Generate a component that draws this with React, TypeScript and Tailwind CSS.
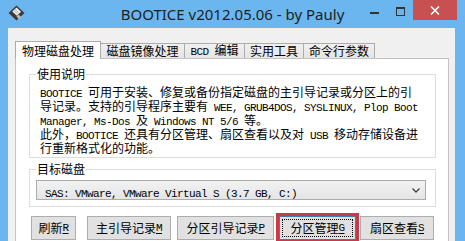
import React from "react";

const cjk = "font-['Noto_Sans_CJK_SC',sans-serif]";

function M({ children }: { children: React.ReactNode }) {
  return (
    <span className="font-['Liberation_Mono','Noto_Sans_CJK_SC',monospace] text-[11px] tracking-[-0.6px]">
      {children}
    </span>
  );
}

function Acc({ children }: { children: React.ReactNode }) {
  return (
    <span className="font-['Liberation_Mono',monospace] text-[11px] tracking-[-0.6px] underline underline-offset-[2px]">
      {children}
    </span>
  );
}

function Tab({ w, active, children, first }: { w: string; active?: boolean; children: React.ReactNode; first?: boolean }) {
  return (
    <div
      className={
        active
          ? `${w} h-[18px] bg-white border border-b-0 border-[#acacac] relative z-10 -mb-px flex items-center justify-center text-[12px] leading-[14px] text-black ${first ? "" : "-ml-px"}`
          : `${w} h-[15px] bg-gradient-to-b from-[#f0f0f0] to-[#e5e5e5] border border-b-0 border-[#acacac] flex items-center justify-center text-[12px] leading-[14px] text-black -ml-px`
      }
    >
      <span className="whitespace-pre">{children}</span>
    </div>
  );
}

function Btn({ w, ml, children }: { w: string; ml: string; children: React.ReactNode }) {
  return (
    <div
      className={`${w} ${ml} mt-[3px] h-[24px] shrink-0 bg-[#e1e1e1] border border-[#adadad] flex items-center justify-center text-[12px] leading-[14px] text-black whitespace-pre`}
    >
      {children}
    </div>
  );
}

export default function App() {
  return (
    <div className={`w-[465px] h-[241px] overflow-hidden bg-[#6cb6ef] flex flex-col ${cjk}`}>
      {/* Title bar */}
      <div className="h-[28px] shrink-0 grid grid-cols-[1fr_auto_1fr]">
        <div className="flex items-start pl-[8px] pt-[5px]">
          <svg width="17" height="16" viewBox="0 0 17 16">
            <polygon points="8.5,0.5 16.5,8 8.5,15.5 0.5,8" fill="#3b3b3b" />
            <polygon points="8.5,2.5 13,6.8 8.8,10.8 4.3,6.5" fill="#f4f4f4" />
            <polygon points="10.5,9.5 13.5,12.3 11,14.2 8.5,11.6" fill="#bdbdbd" />
            <line x1="6" y1="5.6" x2="9.6" y2="9" stroke="#9a9a9a" strokeWidth="0.8" />
            <line x1="7.2" y1="4.4" x2="10.8" y2="7.8" stroke="#9a9a9a" strokeWidth="0.8" />
          </svg>
        </div>
        <div className="font-['Noto_Sans',sans-serif] text-[15px] leading-[28px] text-[#1e1e1e] whitespace-pre">
          BOOTICE v2012.05.06 - by Pauly
        </div>
        <div className="flex justify-end items-start pr-[8px]">
          <div className="w-[26px] h-[20px] flex justify-center items-start pt-[12px]">
            <div className="w-[9px] h-[2px] bg-[#333]" />
          </div>
          <div className="w-[26px] h-[20px] flex justify-center items-start pt-[7px]">
            <div className="w-[9px] h-[9px] border border-t-2 border-[#333]" />
          </div>
          <div className="w-[44px] h-[20px] bg-[#c75050] flex items-center justify-center">
            <svg width="10" height="9" viewBox="0 0 10 9">
              <path d="M1 0.5 L9 8.5 M9 0.5 L1 8.5" stroke="#fff" strokeWidth="1.6" />
            </svg>
          </div>
        </div>
      </div>

      {/* Client area */}
      <div className="flex-1 ml-[8px] mr-[10px] bg-[#f0f0f0] pt-[12px] pl-[7px] pr-[6px] flex flex-col">
        {/* Tabs */}
        <div className="flex items-end h-[18px] shrink-0">
          <Tab w="w-[86px]" active first>物理磁盘处理</Tab>
          <Tab w="w-[85px]">磁盘镜像处理</Tab>
          <Tab w="w-[61px]"><M>BCD </M>编辑</Tab>
          <Tab w="w-[60px]">实用工具</Tab>
          <Tab w="w-[72px]">命令行参数</Tab>
        </div>

        {/* Panel */}
        <div className="flex-1 bg-white border border-[#c4c4c4] pl-[13px] pr-[12px] flex flex-col">
          {/* Group 1 */}
          <fieldset className="mt-[8px] border border-[#dcdcdc] px-0">
            <legend className="ml-[6px] px-[1px] text-[12px] leading-[14px] text-black">使用说明</legend>
            <div className="h-[76px] pt-[5px] pl-[10px] text-[12px] leading-[12px] text-black">
              <div className="whitespace-pre"><M>BOOTICE </M>可用于安装、修复或备份指定磁盘的主引导记录或分区上的引</div>
              <div className="whitespace-pre">导记录。支持的引导程序主要有<M> WEE, GRUB4DOS, SYSLINUX, Plop Boot</M></div>
              <div className="whitespace-pre"><M>Manager, Ms-Dos </M>及<M> Windows NT 5/6 </M>等。</div>
              <div className="whitespace-pre">此外，<M>BOOTICE </M>还具有分区管理、扇区查看以及对<M> USB </M>移动存储设备进</div>
              <div className="whitespace-pre">行重新格式化的功能。</div>
            </div>
          </fieldset>

          {/* Group 2 */}
          <fieldset className="mt-[4px] border border-[#dcdcdc] px-0">
            <legend className="ml-[6px] px-[1px] text-[12px] leading-[14px] text-black">目标磁盘</legend>
            <div className="h-[30px] pt-[4px] pl-[6px] pr-[9px]">
              <div className="h-[20px] bg-gradient-to-b from-[#f2f2f2] to-[#e5e5e5] border border-[#acacac] flex items-center pl-[8px] pr-[5px] text-black">
                <div className="flex-1 whitespace-pre"><M>SAS: VMware, VMware Virtual S (3.7 GB, C:)</M></div>
                <svg width="8" height="5" viewBox="0 0 8 5">
                  <path d="M0.5 0.5 L4 4 L7.5 0.5" stroke="#444" strokeWidth="1.3" fill="none" />
                </svg>
              </div>
            </div>
          </fieldset>

          {/* Buttons */}
          <div className="flex items-start mt-[6px]">
            <Btn w="w-[45px]" ml="ml-[2px]">刷新<Acc>R</Acc></Btn>
            <Btn w="w-[84px]" ml="ml-[11px]">主引导记录<Acc>M</Acc></Btn>
            <Btn w="w-[97px]" ml="ml-[6px]">分区引导记录<Acc>P</Acc></Btn>
            <div className="ml-[2px] shrink-0 border-[3px] border-[#c9394a]">
              <div className="w-[77px] h-[24px] bg-[#e1e1e1] border border-[#3c7fb1] p-[2px] flex">
                <div className="flex-1 border border-dotted border-black flex items-center justify-center text-[12px] leading-[14px] text-black whitespace-pre">
                  分区管理<Acc>G</Acc>
                </div>
              </div>
            </div>
            <Btn w="w-[74px]" ml="ml-[1px]">扇区查看<Acc>S</Acc></Btn>
          </div>
        </div>
      </div>
    </div>
  );
}
